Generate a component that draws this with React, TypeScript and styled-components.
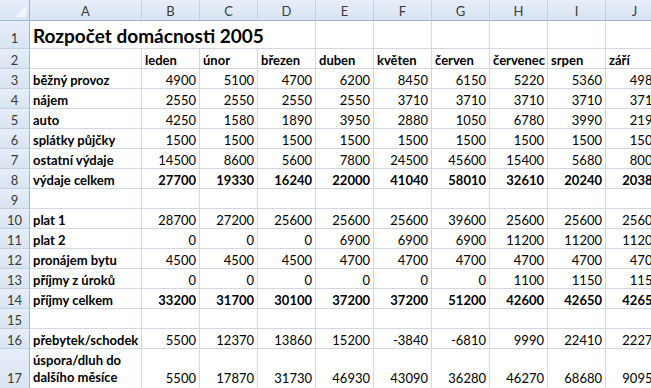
import React from "react";
import styled, { createGlobalStyle, css } from "styled-components";

const Global = createGlobalStyle`
  html, body { margin: 0; padding: 0; background: #ffffff; overflow: hidden; }
  body { font-family: Lato, "Open Sans", sans-serif; }
`;

const Sheet = styled.div`
  display: grid;
  grid-template-columns: 30px 112px repeat(9, 58px);
  grid-template-rows: 21px 28px repeat(15, 20px) 42px;
  width: max-content;
  font-family: Lato, "Open Sans", sans-serif;
  font-size: 13px;
  color: #000;
`;

const headerBg = css`
  background: linear-gradient(#e6eef8, #d9e4f2);
  color: #3b3b3b;
`;

const Corner = styled.div`
  ${headerBg};
  box-sizing: border-box;
  border-right: 1px solid #9eb6ce;
  border-bottom: 1px solid #9eb6ce;
  display: flex;
  align-items: flex-end;
  justify-content: flex-end;
  padding: 0 3px 3px 0;
`;

const ColHeader = styled.div`
  ${headerBg};
  box-sizing: border-box;
  border-right: 1px solid #c2d1e5;
  border-bottom: 1px solid #9eb6ce;
  display: flex;
  align-items: center;
  justify-content: center;
  line-height: 16px;
  padding-top: 1px;
`;

const RowHeader = styled.div`
  ${headerBg};
  box-sizing: border-box;
  border-right: 1px solid #9eb6ce;
  border-bottom: 1px solid #c2d1e5;
  display: flex;
  align-items: flex-end;
  justify-content: center;
  line-height: 16px;
  padding-bottom: ${(p: { $pad?: number }) => p.$pad ?? 0}px;
`;

interface CellProps {
  $align?: "left" | "right";
  $bold?: boolean;
  $span?: number;
  $pad?: number;
}

const Cell = styled.div<CellProps>`
  box-sizing: border-box;
  border-right: 1px solid #d0d7e5;
  border-bottom: 1px solid #d0d7e5;
  display: flex;
  align-items: flex-end;
  justify-content: ${(p) => (p.$align === "right" ? "flex-end" : "flex-start")};
  padding: 0 3px ${(p) => p.$pad ?? 0}px 3px;
  font-weight: ${(p) => (p.$bold ? 700 : 400)};
  white-space: nowrap;
  line-height: 16px;
  overflow: visible;
  ${(p) => (p.$span ? `grid-column: span ${p.$span};` : "")}
`;

const Title = styled(Cell)`
  font-size: 19px;
  line-height: 22px;
  padding-bottom: 1px;
`;

const WrapLabel = styled(Cell)`
  white-space: normal;
  line-height: 17px;
`;

const months = ["leden", "únor", "březen", "duben", "květen", "červen", "červenec", "srpen", "září"];
const letters = ["A", "B", "C", "D", "E", "F", "G", "H", "I", "J"];

type Row = { label: string; values: (number | null)[]; bold?: boolean };

const rows: Row[] = [
  { label: "běžný provoz", values: [4900, 5100, 4700, 6200, 8450, 6150, 5220, 5360, 4980] },
  { label: "nájem", values: [2550, 2550, 2550, 2550, 3710, 3710, 3710, 3710, 3710] },
  { label: "auto", values: [4250, 1580, 1890, 3950, 2880, 1050, 6780, 3990, 2190] },
  { label: "splátky půjčky", values: [1500, 1500, 1500, 1500, 1500, 1500, 1500, 1500, 1500] },
  { label: "ostatní výdaje", values: [14500, 8600, 5600, 7800, 24500, 45600, 15400, 5680, 8000] },
  { label: "výdaje celkem", values: [27700, 19330, 16240, 22000, 41040, 58010, 32610, 20240, 20380], bold: true },
  { label: "", values: [null, null, null, null, null, null, null, null, null] },
  { label: "plat 1", values: [28700, 27200, 25600, 25600, 25600, 39600, 25600, 25600, 25600] },
  { label: "plat 2", values: [0, 0, 0, 6900, 6900, 6900, 11200, 11200, 11200] },
  { label: "pronájem bytu", values: [4500, 4500, 4500, 4700, 4700, 4700, 4700, 4700, 4700] },
  { label: "příjmy z úroků", values: [0, 0, 0, 0, 0, 0, 1100, 1150, 1150] },
  { label: "příjmy celkem", values: [33200, 31700, 30100, 37200, 37200, 51200, 42600, 42650, 42650], bold: true },
  { label: "", values: [null, null, null, null, null, null, null, null, null] },
  { label: "přebytek/schodek", values: [5500, 12370, 13860, 15200, -3840, -6810, 9990, 22410, 22270] },
];

const lastRow = [5500, 17870, 31730, 46930, 43090, 36280, 46270, 68680, 90950];

const CornerMark = () => (
  <svg width="11" height="11" viewBox="0 0 11 11">
    <polygon points="11,0 11,11 0,11" fill="#f3f6fb" />
  </svg>
);

export default function App() {
  return (
    <>
      <Global />
      <Sheet>
        <Corner>
          <CornerMark />
        </Corner>
        {letters.map((l) => (
          <ColHeader key={l}>{l}</ColHeader>
        ))}

        <RowHeader $pad={2}>1</RowHeader>
        <Title $span={4} $bold>
          Rozpočet domácnosti 2005
        </Title>
        {letters.slice(4).map((l) => (
          <Cell key={l} />
        ))}

        <RowHeader>2</RowHeader>
        <Cell />
        {months.map((m) => (
          <Cell key={m} $bold>
            {m}
          </Cell>
        ))}

        {rows.map((r, i) => (
          <React.Fragment key={i}>
            <RowHeader>{i + 3}</RowHeader>
            <Cell $bold>{r.label}</Cell>
            {r.values.map((v, j) => (
              <Cell key={j} $align="right" $bold={r.bold}>
                {v === null ? "" : v}
              </Cell>
            ))}
          </React.Fragment>
        ))}

        <RowHeader $pad={4}>17</RowHeader>
        <WrapLabel $bold $pad={4}>
          úspora/dluh do dalšího měsíce
        </WrapLabel>
        {lastRow.map((v, j) => (
          <Cell key={j} $align="right" $pad={4}>
            {v}
          </Cell>
        ))}
      </Sheet>
    </>
  );
}
